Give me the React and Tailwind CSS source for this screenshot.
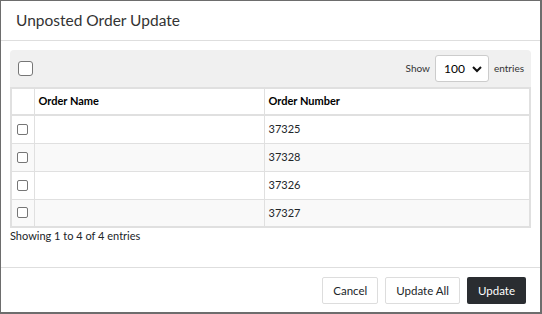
import React from 'react';

const rows = ['37325', '37328', '37326', '37327'];

function Check({ big }) {
  return (
    <span
      className={
        big
          ? 'block w-[15px] h-[15px] rounded-[3px] border border-[#767676] bg-white'
          : 'block w-[11px] h-[11px] rounded-[2px] border border-[#767676] bg-white'
      }
    />
  );
}

export default function App() {
  return (
    <div className="w-[542px] h-[314px] bg-[#6d6d6d] pt-px pl-px pr-[2px] pb-[2px] font-['Lato',sans-serif]">
      <div className="h-full bg-white flex flex-col text-[#212529]">
        <div className="h-[40px] border-b border-[#dedede] flex items-center px-[15px]">
          <h1 className="text-[15.5px] text-[#333]">Unposted Order Update</h1>
        </div>
        <div className="px-[9px] pt-[9px] h-[226px]">
          <div className="bg-[#f0f0f0] rounded-t-[4px]">
            <div className="h-[37px] flex items-center justify-between pl-[8px] pr-[7px]">
              <Check big />
              <div className="flex items-center gap-[5px] text-[10px] text-[#333]">
                <span>Show</span>
                <div className="w-[54px] h-[27px] bg-white border border-[#ccc] rounded-[3px] flex items-center justify-between pl-[8px] pr-[6px] text-[12px] text-black">
                  <span>100</span>
                  <svg width="10" height="8" viewBox="0 0 10 8">
                    <path d="M1 2l4 4 4-4" fill="none" stroke="#111" strokeWidth="2" />
                  </svg>
                </div>
                <span>entries</span>
              </div>
            </div>
            <table className="w-full border-collapse border-2 border-[#e0e0e0] bg-white text-[11px]">
              <thead>
                <tr className="h-[27px] border-b-[2px] border-[#e0e0e0]">
                  <th className="w-[23px] border-r border-[#e0e0e0]" />
                  <th className="w-[230px] text-left font-bold pl-[4px] border-r border-[#e0e0e0] text-black">Order Name</th>
                  <th className="text-left font-bold pl-[4px] text-black">Order Number</th>
                </tr>
              </thead>
              <tbody>
                {rows.map((n, i) => (
                  <tr key={n} className={'h-[28px] border-t border-[#e0e0e0] ' + (i % 2 ? 'bg-[#f9f9f9]' : 'bg-white')}>
                    <td className="border-r border-[#e0e0e0] pl-[5px]"><Check /></td>
                    <td className="border-r border-[#e0e0e0]" />
                    <td className="pl-[4px]">{n}</td>
                  </tr>
                ))}
              </tbody>
            </table>
          </div>
          <p className="text-[11px] mt-0 text-[#212529]">Showing 1 to 4 of 4 entries</p>
        </div>
        <div className="flex-1 border-t border-[#dedede] flex items-center justify-end gap-[7px] pr-[14px] pt-[1px]">
          <button className="h-[27px] px-[10px] border border-[#ddd] rounded-[2px] text-[11.5px] bg-white">Cancel</button>
          <button className="h-[27px] px-[10px] border border-[#ddd] rounded-[2px] text-[11.5px] bg-white">Update All</button>
          <button className="h-[27px] px-[11px] rounded-[2px] text-[11.5px] bg-[#2a2d31] text-white">Update</button>
        </div>
      </div>
    </div>
  );
}
